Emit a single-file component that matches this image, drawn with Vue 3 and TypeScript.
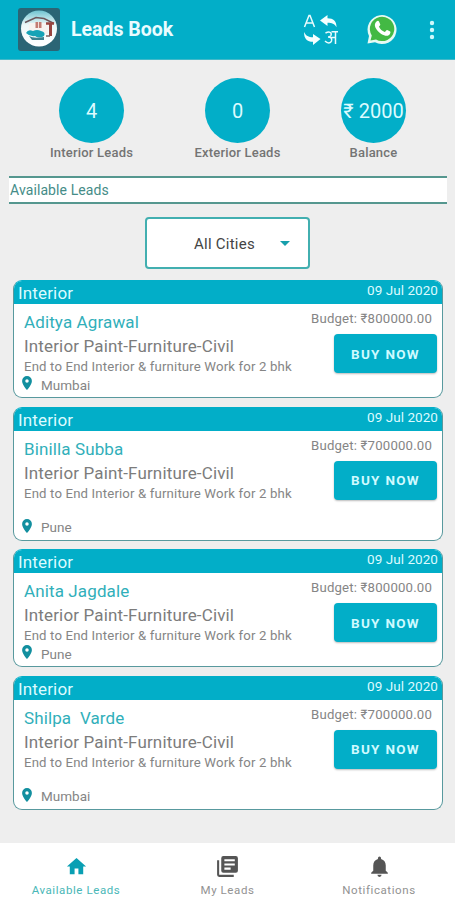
<script setup lang="ts">
interface Stat { value: string; label: string; kind: string }
interface Lead { name: string; budget: string; city: string; tall: boolean }

const stats: Stat[] = [
  { value: '4', label: 'Interior Leads', kind: 'interior' },
  { value: '0', label: 'Exterior Leads', kind: 'exterior' },
  { value: '₹ 2000', label: 'Balance', kind: 'balance' },
]

const leads: Lead[] = [
  { name: 'Aditya Agrawal', budget: '₹800000.00', city: 'Mumbai', tall: false },
  { name: 'Binilla Subba', budget: '₹700000.00', city: 'Pune', tall: true },
  { name: 'Anita Jagdale', budget: '₹800000.00', city: 'Pune', tall: false },
  { name: 'Shilpa  Varde', budget: '₹700000.00', city: 'Mumbai', tall: true },
]
</script>

<template>
  <div class="screen">
    <header class="bar">
      <svg class="logo" viewBox="0 0 42 43">
        <defs>
          <linearGradient id="sky" x1="0" y1="0" x2="0" y2="1">
            <stop offset="0" stop-color="#6fc3d0" />
            <stop offset="0.4" stop-color="#eef8f8" />
            <stop offset="1" stop-color="#ffffff" />
          </linearGradient>
        </defs>
        <rect width="42" height="43" rx="3" fill="#2b6575" />
        <circle cx="21" cy="20.5" r="18" fill="url(#sky)" />
        <path d="M11 15h19v11H11z" fill="#f7f3f0" />
        <path d="M7 14.500 18 9.500l8 1 10 5" fill="none" stroke="#6d565b" stroke-width="1.5" />
        <path d="M28 15.500h8" stroke="#99443f" stroke-width="2.500" />
        <path d="M32.500 16v12" stroke="#99443f" stroke-width="3" />
        <path d="M32 28h-4" stroke="#7c6262" stroke-width="1.500" />
        <path d="M17.500 14h6v6h-6z" fill="#c27c73" />
        <path d="M20.500 14v6" stroke="#f5dcd6" stroke-width="1" />
        <path d="M8 25q2-4 7-2 4-2 8 0 5 1 3 5-5 3-9 0-5 1-9-3z" fill="#16a3b6" />
        <path d="M11 28q5 3 15 1v3H14z" fill="#3c8290" />
      </svg>
      <h1 class="title">Leads Book</h1>
      <svg class="translate" viewBox="0 0 36 32">
        <path d="M1.500 13 6 1.500h1L11.500 13M3.200 9h6.500" fill="none" stroke="#e9fbfd" stroke-width="1.500" />
        <path d="M17 6.500 24.500 1v3.200c6 0 9 3 9 9-2-3.500-4.500-4.500-9-4.500V12z" fill="#f4ffff" />
        <path d="M17.500 25 10 31v-3.200c-6 0-9-3-9-9.800 2 4 4.500 5.200 9 5.200V20z" fill="#f4ffff" />
        <path d="M28.500 17.800H35M32.500 18v12M22.500 19c4-2 6.500-.5 5.500 2.200-.6 1.500-1.500 1.800-3 1.800 3 0 4.200 1.500 3.500 4-.8 2.500-4.200 2.500-6.500 0M28 23.500h4.500" fill="none" stroke="#e9fbfd" stroke-width="1.500" />
      </svg>
      <svg class="whatsapp" viewBox="0 0 32 32">
        <path d="M1.500 30.500 3 23A14.500 14.500 0 1 1 9 29.300z" fill="#e6faf3" />
        <path d="M4.500 27.500 5.800 22.500A12.200 12.200 0 1 1 10 26.500z" fill="#43b944" />
        <path d="M10.500 8.500c1-1 2-1 2.500 0l1.300 3c.2.600-1.300 2-1.300 2.200 1.200 2.600 3 4.200 5.700 5.300.5 0 1.800-2.200 2.500-1.900l3 1.500c.8.400-.2 3-1.500 3.700-2 1.100-4.600.3-7.500-1.300-2.600-1.500-4.600-3.900-5.800-6.400-1-2.500-.6-4.700 1.100-6.100z" fill="#fff" />
      </svg>
      <svg class="more" viewBox="0 0 6 20">
        <circle cx="3" cy="3" r="2.200" /><circle cx="3" cy="10" r="2.200" /><circle cx="3" cy="17" r="2.200" />
      </svg>
    </header>

    <main class="content">
      <section class="stats">
        <div v-for="s in stats" :key="s.kind" class="stat" :class="s.kind">
          <div class="circle">{{ s.value }}</div>
          <div class="stat-label">{{ s.label }}</div>
        </div>
      </section>
      <h2 class="section">Available Leads</h2>
      <button class="select">
        <span>All Cities</span>
        <svg viewBox="0 0 10 5"><path d="M0 0h10L5 5z" /></svg>
      </button>

      <section class="cards">
        <article v-for="lead in leads" :key="lead.name" class="card" :class="{ tall: lead.tall }">
          <div class="card-head"><span class="type">Interior</span><span class="date">09 Jul 2020</span></div>
          <div class="card-body">
            <div class="info">
              <div class="name">{{ lead.name }}</div>
              <div class="category">Interior Paint-Furniture-Civil</div>
              <div class="desc">End to End Interior &amp; furniture Work for 2 bhk</div>
              <div class="place">
                <svg viewBox="5 2 14 20"><path d="M12 2a7 7 0 0 0-7 7c0 5.300 7 13 7 13s7-7.700 7-13a7 7 0 0 0-7-7zm0 9.500a2.500 2.500 0 1 1 0-5 2.500 2.500 0 0 1 0 5z" /></svg>
                <span>{{ lead.city }}</span>
              </div>
            </div>
            <div class="side">
              <div class="budget">Budget: {{ lead.budget }}</div>
              <button class="buy">BUY NOW</button>
            </div>
          </div>
        </article>
      </section>
    </main>

    <nav class="nav">
      <a class="tab first active">
        <svg class="home" viewBox="0 0 24 24"><path d="M10 20v-6h4v6h5v-8h3L12 3 2 12h3v8z" /></svg>
        <span>Available Leads</span>
      </a>
      <a class="tab second">
        <svg class="library" viewBox="0 0 24 24"><path d="M4 6H2v14a2 2 0 0 0 2 2h14v-2H4zM20 2H8a2 2 0 0 0-2 2v12a2 2 0 0 0 2 2h12a2 2 0 0 0 2-2V4a2 2 0 0 0-2-2zm-1 9H9V9h10zm-4 4H9v-2h6zm4-8H9V5h10z" /></svg>
        <span>My Leads</span>
      </a>
      <a class="tab third">
        <svg viewBox="0 0 24 24"><path d="M12 22a2 2 0 0 0 2-2h-4a2 2 0 0 0 2 2zm6-6v-5c0-3.070-1.640-5.640-4.500-6.320V4a1.500 1.500 0 0 0-3 0v.68C7.630 5.360 6 7.920 6 11v5l-2 2v1h16v-1z" /></svg>
        <span>Notifications</span>
      </a>
    </nav>
  </div>
</template>

<style>
body { margin: 0; overflow: hidden; }
</style>

<style scoped>
* { box-sizing: border-box; }
.screen { width: 455px; height: 900px; background: #eeeeee; display: flex; flex-direction: column; font-family: Roboto, "Noto Sans", sans-serif; color: #7c7c7c; white-space: nowrap; overflow: hidden; }
button { font-family: inherit; padding: 0; }
.bar { flex: none; height: 60px; background: #02aec8; border-bottom: 1px solid #42b9c9; display: flex; align-items: center; padding: 0 20px 0 18px; }
.logo { width: 42px; height: 43px; }
.title { margin: 1px 0 0 11px; width: 102px; color: #eafcff; font-size: 19.500px; font-weight: 700; line-height: 24px; }
.translate { width: 36px; height: 32px; margin-left: 130px; }
.whatsapp { width: 32px; height: 32px; margin-left: 27px; margin-top: -2px; }
.more { width: 6px; height: 20px; margin-left: auto; fill: #cff8fb; }
.content { flex: 1; }
.stats { display: grid; grid-template-columns: 146px 146px 126px; height: 116px; padding: 18px 0 0 18.500px; }
.stat { display: flex; flex-direction: column; align-items: center; }
.circle { width: 65px; height: 65px; border-radius: 50%; background: #02aec8; color: #dcfbff; display: flex; align-items: center; justify-content: center; font-size: 20px; padding-top: 1px; }
.stat-label { margin-top: 2px; font-size: 13px; line-height: 16px; font-weight: 500; letter-spacing: .2px; color: #747474; }
.section { margin: 0 8px 0 9px; height: 28px; border: solid #55978f; border-width: 2px 0; background: #fff; color: #458c88; font-size: 14px; font-weight: 400; letter-spacing: .1px; line-height: 25px; padding-left: 1px; }
.select { width: 165px; height: 52px; margin: 13px 0 0 145px; border: 2px solid #42afb0; border-radius: 4px; background: #fff; color: #444; font-size: 15px; letter-spacing: .25px; display: flex; align-items: center; padding-left: 47px; }
.select span { width: 61px; text-align: left; padding-top: 1px; }
.select svg { width: 10px; height: 5px; margin-left: 25px; fill: #169fab; }
.cards { padding: 11px 12px 0 13px; display: flex; flex-direction: column; gap: 8.500px; }
.card { height: 118px; background: #fff; border: 1px solid #58999e; border-top-color: #02aec8; border-radius: 9px; overflow: hidden; }
.card.tall { height: 134px; }
.card-head { height: 23px; background: #02aec8; display: flex; justify-content: space-between; color: #dcfbff; padding: 0 4px 0 4px; }
.type { font-size: 17px; line-height: 24px; letter-spacing: .15px; }
.date { font-size: 13.500px; line-height: 19px; letter-spacing: .05px; }
.card-body { height: calc(100% - 23px); display: flex; justify-content: space-between; padding: 6px 5px 4px 10px; }
.info { display: flex; flex-direction: column; }
.name { color: #31afba; font-size: 17px; line-height: 25px; letter-spacing: .12px; white-space: pre; }
.category { font-size: 17px; line-height: 22px; letter-spacing: .15px; }
.desc { font-size: 13.200px; line-height: 19px; letter-spacing: .15px; color: #858585; }
.place { margin-top: auto; height: 17px; display: flex; align-items: center; gap: 9px; font-size: 13.500px; margin-left: -2px; color: #858585; }
.place svg { width: 10px; height: 14px; margin-top: -3px; fill: #128f9f; }
.side { display: flex; flex-direction: column; align-items: flex-end; }
.budget { font-size: 13.200px; line-height: 18px; letter-spacing: .18px; margin-right: 5px; color: #858585; }
.buy { width: 103px; height: 39px; margin-top: 6px; border: 0; border-radius: 4px; background: #02aec8; box-shadow: 0 1px 2px #0004; color: #cffaff; font-size: 13.500px; font-weight: 700; letter-spacing: 1.300px; }
.nav { flex: none; height: 57px; background: #fff; display: grid; grid-template-columns: 152px 151px 152px; }
.tab { display: flex; flex-direction: column; align-items: center; padding-top: 11px; font-size: 11.500px; color: #929292; letter-spacing: .58px; }
.tab svg { width: 25px; height: 25px; fill: #555; }
.tab .home { width: 23px; }
.tab span { line-height: 14px; margin-top: 4px; }
.tab.active { color: #49b7b7; }
.tab.active svg { fill: #099fb3; }
</style>
